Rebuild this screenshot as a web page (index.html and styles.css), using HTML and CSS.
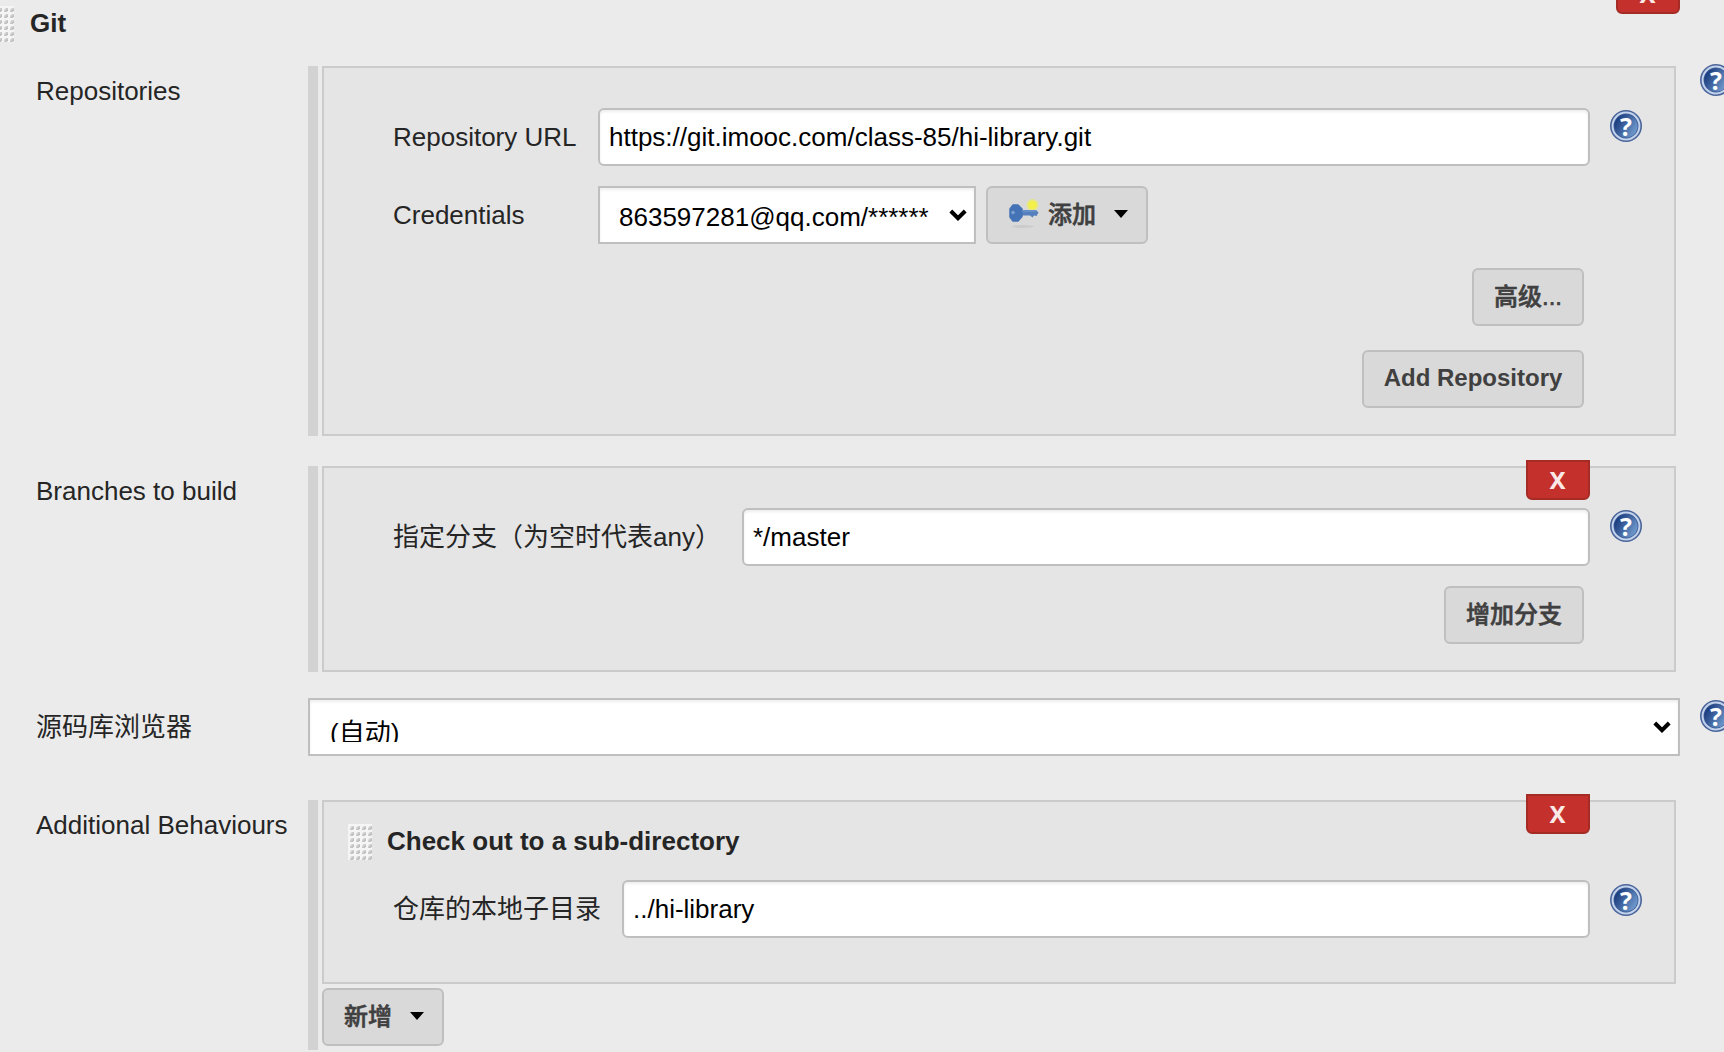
FILE: index.html
```html
<!DOCTYPE html>
<html lang="zh-CN">
<head>
<meta charset="utf-8">
<title>Git</title>
<link rel="stylesheet" href="styles.css">
</head>
<body>
<svg class="defs" width="0" height="0" aria-hidden="true">
  <defs>
    <linearGradient id="blue" x1="0" y1="0.2" x2="1" y2="0.8">
      <stop offset="0.1" stop-color="#1d3f80"/>
      <stop offset="0.9" stop-color="#6d97cb"/>
    </linearGradient>
    <linearGradient id="dot" x1="0" y1="0" x2="1" y2="1">
      <stop offset="0.2" stop-color="#dedede"/>
      <stop offset="1" stop-color="#aaaaaa"/>
    </linearGradient>
    <pattern id="dots" width="6" height="6" patternUnits="userSpaceOnUse">
      <rect width="6" height="6" fill="#f5f5f5"/>
      <path d="M2 6V3.500L3.500 2H6V4.500L4.500 6Z" fill="url(#dot)"/>
    </pattern>
    <symbol id="help" viewBox="0 0 32 32">
      <circle cx="16" cy="16" r="16" fill="#4a6599"/>
      <circle cx="16" cy="16" r="13.4" fill="#38588f" stroke="#c3d3ee" stroke-width="2"/>
      <circle cx="16" cy="16" r="11.600" fill="url(#blue)"/>
      <text x="16" y="25.500" class="help-mark">?</text>
    </symbol>
    <symbol id="chevron" viewBox="0 0 18 12">
      <path d="M1.8 2L9 9.2L16.2 2" fill="none" stroke="#000" stroke-width="4"/>
    </symbol>
    <symbol id="caret" viewBox="0 0 14 8">
      <path d="M0 0H14L7 8Z"/>
    </symbol>
  </defs>
</svg>
<main class="page">
  <header class="head">
    <svg class="grip" width="24" height="36"><rect width="24" height="36" fill="url(#dots)"/></svg>
    <h1 class="title">Git</h1>
    <button class="remove remove-top">X</button>
  </header>

  <section class="row repos">
    <div class="label">Repositories</div>
    <div class="rail"></div>
    <div class="panel">
      <div class="field">
        <label class="name name-repo">Repository URL</label>
        <input class="input" value="https://git.imooc.com/class-85/hi-library.git">
        <svg class="help"><use href="#help"/></svg>
      </div>
      <div class="field field-cred">
        <label class="name name-repo">Credentials</label>
        <div class="select select-cred"><span class="value">863597281@qq.com/******</span><svg class="chevron"><use href="#chevron"/></svg></div>
        <button class="btn btn-add">
          <svg class="key" viewBox="0 0 32 32">
            <ellipse cx="15" cy="28.500" rx="11" ry="1.500" fill="#cbcbcb"/>
            <circle cx="24.500" cy="7" r="6" fill="#e6e68c"/>
            <circle cx="24.500" cy="7" r="4.200" fill="#f4f04a"/>
            <path d="M12 12H28L30.500 14.500L28.500 18L26 17.500L24.500 19.500L22 17.500H12Z" fill="#5580bd"/>
            <path d="M5 7H10L14 11V18.500L10 23H5L2 19V11Z" fill="#4473b6" stroke="#4473b6" stroke-width="1.500" stroke-linejoin="round"/>
            <path d="M14 13H28" stroke="#7098cd" stroke-width="1.200"/>
            <circle cx="5" cy="14.500" r="1.800" fill="#7c9fd0"/>
          </svg>
          <span>添加</span><svg class="caret"><use href="#caret"/></svg>
        </button>
      </div>
      <div class="actions actions-adv"><button class="btn">高级...</button></div>
      <div class="actions actions-repo"><button class="btn btn-repo">Add Repository</button></div>
    </div>
    <svg class="help help-outer"><use href="#help"/></svg>
  </section>

  <section class="row branches">
    <div class="label">Branches to build</div>
    <div class="rail"></div>
    <div class="panel">
      <button class="remove">X</button>
      <div class="field">
        <label class="name name-branch">指定分支（为空时代表any）</label>
        <input class="input" value="*/master">
        <svg class="help"><use href="#help"/></svg>
      </div>
      <div class="actions actions-branch"><button class="btn">增加分支</button></div>
    </div>
  </section>

  <section class="row browser">
    <div class="label">源码库浏览器</div>
    <div class="select select-browser"><span class="value">(自动)</span><svg class="chevron"><use href="#chevron"/></svg></div>
    <svg class="help help-outer"><use href="#help"/></svg>
  </section>

  <section class="row extra">
    <div class="label">Additional Behaviours</div>
    <div class="rail"></div>
    <div class="stack">
      <div class="panel panel-sub">
        <button class="remove">X</button>
        <div class="subhead">
          <svg class="grip" width="24" height="36"><rect width="24" height="36" fill="url(#dots)"/></svg>
          <h2 class="title">Check out to a sub-directory</h2>
        </div>
        <div class="field field-sub">
          <label class="name name-sub">仓库的本地子目录</label>
          <input class="input" value="../hi-library">
          <svg class="help"><use href="#help"/></svg>
        </div>
      </div>
      <button class="btn btn-new"><span>新增</span><svg class="caret"><use href="#caret"/></svg></button>
    </div>
  </section>
</main>
</body>
</html>
```
FILE: styles.css
```css
* { box-sizing: border-box; }

body {
  margin: 0;
  background: #ebebeb;
  color: #252525;
  font: 26px/30px "Liberation Sans", "Noto Sans CJK SC", sans-serif;
  overflow: hidden;
}

svg { display: block; flex: none; }
.defs { position: absolute; }

.page {
  width: 1724px;
  height: 1052px;
  overflow: hidden;
}

.head {
  position: relative;
  display: flex;
  align-items: flex-start;
  height: 66px;
  padding-top: 6px;
}
.head .grip { margin-left: -10px; }
.title {
  margin: 2px 0 0 16px;
  font-size: 26px;
  line-height: 30px;
  font-weight: bold;
}

.row { display: flex; align-items: stretch; }
.repos { height: 370px; margin-bottom: 30px; }
.branches { height: 206px; margin-bottom: 26px; }
.browser { height: 58px; margin-bottom: 44px; }
.extra { height: 250px; }

.label {
  flex: none;
  width: 308px;
  padding: 10px 0 0 36px;
  white-space: nowrap;
}
.browser .label { padding-top: 14px; }

.rail { flex: none; width: 10px; margin-right: 4px; background: #d2d2d2; }

.panel {
  position: relative;
  flex: none;
  width: 1354px;
  padding: 40px 32px 0 69px;
  border: 2px solid #cbcbcb;
  background: #e5e5e5;
}

.field { display: flex; align-items: flex-start; height: 58px; }
.field-cred { margin-top: 20px; }
.name { flex: none; padding-top: 14px; white-space: nowrap; }
.name-repo { width: 205px; }
.name-branch { width: 349px; }
.name-sub { width: 229px; }

.input, .select {
  height: 58px;
  border: 2px solid #bfbfbf;
  background: #fff;
  box-shadow: inset 0 2px 3px rgba(0, 0, 0, 0.07);
  color: #000;
}
.input {
  flex: 1;
  min-width: 0;
  padding: 0 9px;
  border-radius: 6px;
  font: inherit;
}
.select {
  display: flex;
  flex: none;
  justify-content: space-between;
  padding: 14px 7px 0 19px;
}
.value { height: 30px; overflow: hidden; white-space: nowrap; }
.chevron { width: 18px; height: 12px; margin-top: 7px; }
.select-cred { width: 378px; }
.select-browser { width: 1372px; padding-left: 20px; }
.select-browser .value { height: 28px; padding-top: 4px; }

.help { width: 32px; height: 32px; margin: 2px 0 0 20px; }
.help-outer { margin: -2px 0 0 24px; }
.browser .help-outer { margin: 2px 0 0 20px; }
.help-mark {
  fill: #fff;
  font: bold 25px "Open Sans", sans-serif;
  text-anchor: middle;
}

.btn {
  height: 58px;
  padding: 0 19px 1px 20px;
  border: 2px solid #bfbfbf;
  border-radius: 6px;
  background: #d9d9d9;
  color: #404040;
  font: 500 24px/28px "Liberation Sans", "Noto Sans CJK SC", sans-serif;
  -webkit-text-stroke: 0.6px #404040;
  white-space: nowrap;
}
.actions .btn { padding-right: 20px; }
.actions .btn-repo {
  width: 222px;
  padding: 0 0 2px;
  font-weight: bold;
  -webkit-text-stroke: 0;
}
.btn-add, .btn-new { display: flex; align-items: center; }
.btn-add { width: 162px; margin-left: 10px; }
.btn-new { width: 122px; margin-top: 4px; }
.key { width: 32px; height: 32px; margin: 0 8px 2px 0; }
.caret { width: 14px; height: 8px; margin: 0 0 2px 18px; }

.actions { display: flex; justify-content: flex-end; padding-right: 58px; }
.actions-adv { margin-top: 24px; }
.actions-repo { margin-top: 24px; }
.actions-branch { margin-top: 20px; }

.remove {
  position: absolute;
  top: -8px;
  right: 84px;
  width: 64px;
  height: 40px;
  padding: 0 1px 1px 0;
  border: 2px solid #a52b25;
  border-radius: 0 0 6px 6px;
  background: #c4302b;
  color: #fbe9e8;
  font: bold 24px/34px "Noto Sans", sans-serif;
}
.remove-top { top: -26px; right: 44px; }

.stack { display: flex; flex-direction: column; align-items: flex-start; }
.panel-sub { height: 184px; padding-top: 22px; }
.subhead { display: flex; height: 36px; margin-left: -45px; }
.subhead .title { margin: 2px 0 0 15px; }
.field-sub { margin-top: 20px; }
.field-sub .help { margin-top: 4px; }
```
